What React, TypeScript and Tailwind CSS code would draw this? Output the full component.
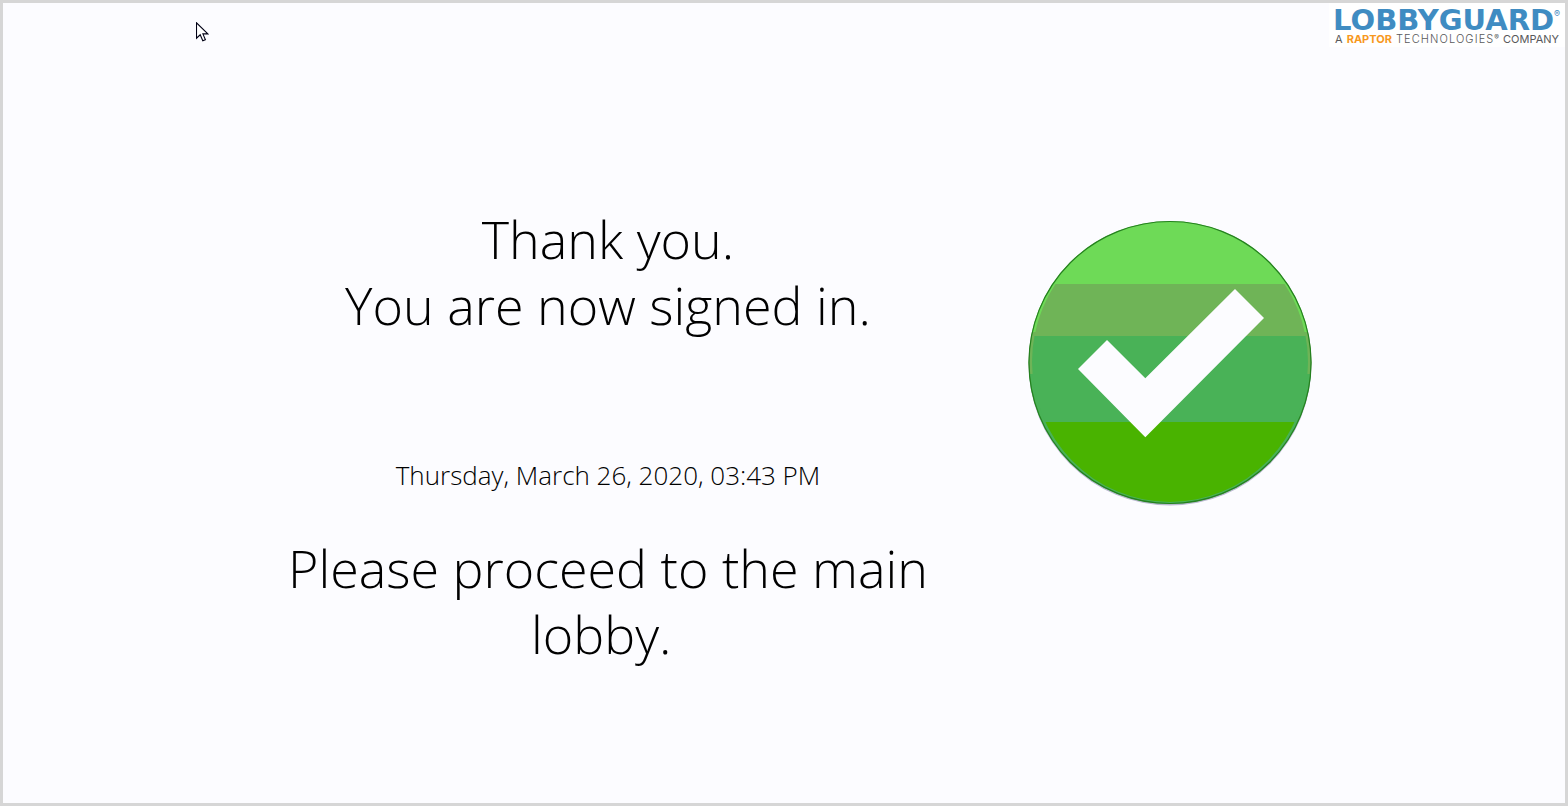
function Logo() {
    return (
        <div className="bg-white px-1 pt-[5px] pb-px flex flex-col items-start">
            <div className="flex items-start text-[#3f8cc2]">
                <span className="font-['DejaVu_Sans',sans-serif] font-bold text-[29px] leading-6">LOBBYGUARD</span>
                <span className="font-['Inter',sans-serif] text-[9px] leading-3">®</span>
            </div>
            <div className="flex items-start gap-1 px-0.5 font-['Inter',sans-serif] text-[11px] leading-[14px] text-[#58595b]">
                <span>A</span>
                <span className="font-bold text-[#f7981d]">RAPTOR</span>
                <span className="flex items-start">
                    <span className="font-light tracking-widest">TECHNOLOGIES</span>
                    <span className="text-[7px] leading-3">®</span>
                </span>
                <span>COMPANY</span>
            </div>
        </div>
    );
}

function SuccessIcon() {
    return (
        <svg viewBox="0 0 284 286" className="w-[284px] h-[286px] shrink-0" role="img" aria-label="Signed in">
            <defs>
                <clipPath id="outer">
                    <circle cx="142" cy="142.5" r="141.5" />
                </clipPath>
                <clipPath id="inner">
                    <ellipse cx="142" cy="142" rx="138" ry="140" />
                </clipPath>
            </defs>
            <circle cx="142" cy="144" r="141.5" fill="#b9b9cf" />
            {/* rim */}
            <g clipPath="url(#outer)">
                <rect width="284" height="112" fill="#6eda57" />
                <rect y="112" width="284" height="42" fill="#6fb457" />
                <rect y="154" width="284" height="132" fill="#49b257" />
            </g>
            {/* face */}
            <g clipPath="url(#inner)">
                <rect width="284" height="64" fill="#6eda57" />
                <rect y="64" width="284" height="52" fill="#6fb457" />
                <rect y="116" width="284" height="86" fill="#49b257" />
                <rect y="202" width="284" height="84" fill="#49b300" />
            </g>
            <circle cx="142" cy="142.5" r="141" fill="none" stroke="#25801f" strokeWidth="1.2" />
            <path d="M50 149 79 120 117.3 158.3 207 69 236 98 117.3 217.3Z" fill="#fcfcff" />
        </svg>
    );
}

function Cursor() {
    return (
        <svg viewBox="0 0 13 20" className="absolute left-[193px] top-[19px] w-[13px] h-5" aria-hidden="true">
            <path
                d="M.5.8V16.2L4.2 12.8 6.8 18.8 9.4 17.7 6.9 11.9H11.8Z"
                fill="#fff"
                stroke="#000014"
                strokeWidth="1.1"
            />
        </svg>
    );
}

export default function App() {
    return (
        <div className="relative min-h-screen bg-[#fcfcff] border-3 border-[#d6d6d6] text-black">
            <header className="flex justify-end">
                <Logo />
            </header>
            <main className="flex justify-center items-start gap-[68px] pt-[159px] font-['Open_Sans',sans-serif] font-light">
                <div className="w-[704px] text-center">
                    <h1 className="text-[52px] leading-[66px]">
                        Thank you.
                        <br />
                        You are now signed in.
                    </h1>
                    <p className="mt-[117px] text-[26px] leading-10">Thursday, March 26, 2020, 03:43 PM</p>
                    <p className="mt-10 text-[52px] leading-[66px]">Please proceed to the main lobby.&nbsp;</p>
                </div>
                <div className="pt-3.5">
                    <SuccessIcon />
                </div>
            </main>
            <Cursor />
        </div>
    );
}
